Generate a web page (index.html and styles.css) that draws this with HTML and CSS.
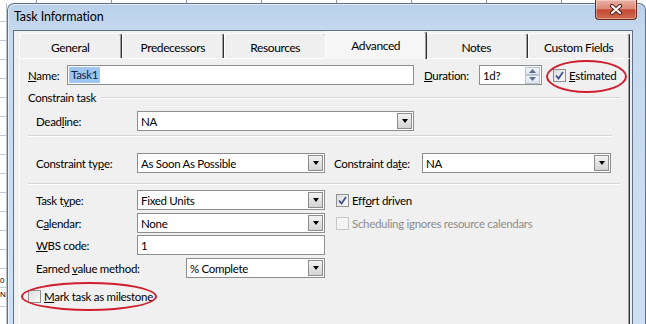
FILE: index.html
```html
<!DOCTYPE html>
<html>
<head>
<meta charset="utf-8">
<title>Task Information</title>
<link rel="stylesheet" href="styles.css">
</head>
<body>
<div class="desk">
  <div class="sheet">
    <div class="cell">0</div>
    <div class="cell">N</div>
  </div>
  <div class="window">
    <div class="titlebar">
      <span class="title">Task Information</span>
      <div class="close">
        <svg width="16" height="11" viewBox="0 0 16 11"><path d="M4 2 L12 9 M12 2 L4 9" stroke="#4b1d17" stroke-width="4.2" stroke-linecap="round"/><path d="M4 2 L12 9 M12 2 L4 9" stroke="#fff" stroke-width="2.2" stroke-linecap="round"/></svg>
      </div>
    </div>
    <div class="client">
      <div class="tabs">
        <div class="tab">General</div>
        <div class="tab">Predecessors</div>
        <div class="tab">Resources</div>
        <div class="tab active">Advanced</div>
        <div class="tab">Notes</div>
        <div class="tab">Custom Fields</div>
      </div>
      <div class="panel">
        <div class="row">
          <span class="lbl lbl-name"><u>N</u>ame:</span>
          <div class="field w-name"><span class="hl">Task1</span></div>
          <span class="lbl lbl-dur"><u>D</u>uration:</span>
          <div class="field w-dur">1d?
            <div class="spin">
              <div class="spin-btn"><svg width="7" height="4" viewBox="0 0 7 4"><path d="M0 4 L3.5 0 L7 4Z" fill="#5b6f8c"/></svg></div>
              <div class="spin-btn"><svg width="7" height="4" viewBox="0 0 7 4"><path d="M0 0 L3.5 4 L7 0Z" fill="#5b6f8c"/></svg></div>
            </div>
          </div>
          <div class="check checked gap-est"><svg width="11" height="11" viewBox="0 0 11 11"><path d="M2 5.5 L4.5 8.5 L9 2" fill="none" stroke="#3a4f94" stroke-width="1.7"/></svg></div>
          <span class="clbl"><u>E</u>stimated</span>
        </div>

        <div class="group">
          <span>Constrain task</span>
          <div class="gline"></div>
        </div>

        <div class="row ind mt-deadline">
          <span class="lbl lbl-main">Dead<u>l</u>ine:</span>
          <div class="field combo w-deadline">NA<span class="dd"><i class="tri"></i></span></div>
        </div>

        <div class="hr hr1"></div>

        <div class="row ind mt-ctype">
          <span class="lbl lbl-main">Constraint ty<u>p</u>e:</span>
          <div class="field combo w-std">As Soon As Possible<span class="dd"><i class="tri"></i></span></div>
          <span class="lbl lbl-cdate">Constraint da<u>t</u>e:</span>
          <div class="field combo w-cdate">NA<span class="dd"><i class="tri"></i></span></div>
        </div>

        <div class="hr hr2"></div>

        <div class="row ind mt-ttype">
          <span class="lbl lbl-main">Task t<u>y</u>pe:</span>
          <div class="field combo w-std">Fixed Units<span class="dd"><i class="tri"></i></span></div>
          <div class="check checked gap-right"><svg width="11" height="11" viewBox="0 0 11 11"><path d="M2 5.5 L4.5 8.5 L9 2" fill="none" stroke="#3a4f94" stroke-width="1.7"/></svg></div>
          <span class="clbl">Eff<u>o</u>rt driven</span>
        </div>

        <div class="row ind mt-cal">
          <span class="lbl lbl-main">C<u>a</u>lendar:</span>
          <div class="field combo w-std">None<span class="dd"><i class="tri"></i></span></div>
          <div class="check disabled gap-right"></div>
          <span class="clbl dis">Scheduling i<u>g</u>nores resource calendars</span>
        </div>

        <div class="row ind mt-wbs">
          <span class="lbl lbl-main"><u>W</u>BS code:</span>
          <div class="field w-std">1</div>
        </div>

        <div class="row ind mt-ev">
          <span class="lbl lbl-ev">Earned <u>v</u>alue method:</span>
          <div class="field combo w-ev">% Complete<span class="dd"><i class="tri"></i></span></div>
        </div>

        <div class="row small mt-ms">
          <div class="check"></div>
          <span class="clbl"><u>M</u>ark task as milestone</span>
        </div>
      </div>
    </div>
  </div>
</div>
<div class="ellipse e1"></div>
<div class="ellipse e2"></div>
</body>
</html>
```

FILE: styles.css
```css
* { box-sizing: border-box; margin: 0; padding: 0; }
html, body { width: 646px; height: 324px; overflow: hidden; }
body {
  position: relative;
  font-family: Lato, "Liberation Sans", sans-serif;
  font-size: 11.5px;
  letter-spacing: -0.3px;
  color: #000;
  background: #fff repeating-linear-gradient(to right, #fff 0 36px, #8d96a1 36px 37px, #fff 37px 75px);
}
u { text-decoration: underline; text-underline-offset: 1px; }

.desk { display: flex; height: 324px; }

.sheet {
  width: 7px;
  flex: none;
  margin-top: 3px;
  overflow: hidden;
  background: repeating-linear-gradient(to bottom, #fff 0 18px, #c3cad4 18px 19px);
  border-right: 1px solid #b9c2cc;
  display: flex;
  flex-direction: column;
  justify-content: flex-end;
  padding-bottom: 22px;
  font-family: "Liberation Sans", sans-serif;
  font-size: 8px;
  letter-spacing: 0;
}
.cell { height: 14px; line-height: 14px; }

.window {
  flex: none;
  width: 639px;
  margin-top: 3px;
  border: 1px solid #5e7189;
  border-bottom: 0;
  border-radius: 7px 7px 0 0;
  background: linear-gradient(to bottom, #b8d0ea 0, #c6daef 28px, #cde0f3 100%);
  box-shadow: inset 1px 1px 0 rgba(255,255,255,0.55);
  padding: 0 12px 0 5px;
  display: flex;
  flex-direction: column;
}

.titlebar { height: 26px; flex: none; display: flex; align-items: flex-start; }
.title { font-size: 12.5px; letter-spacing: -0.1px; line-height: 16px; padding: 5px 0 0 1px; color: #000; }
.close {
  margin-left: auto;
  margin-top: -4px;
  margin-right: -4px;
  width: 42px;
  height: 20px;
  border: 1px solid #6a2c22;
  border-top: 0;
  border-radius: 0 0 4px 4px;
  background: linear-gradient(to bottom, #eab0a2 0%, #dc8b78 45%, #c54a33 52%, #cf6a4f 100%);
  box-shadow: inset 0 0 0 1px rgba(255,255,255,0.35);
  display: flex;
  align-items: center;
  justify-content: center;
}

.client {
  flex: 1;
  background: #f0f0f0;
  border: 1px solid #5f7186;
  border-bottom: 0;
  padding: 2px 1px 0 5px;
  display: flex;
  flex-direction: column;
}

.tabs { display: flex; height: 25px; width: 611px; flex: none; }
.tab {
  flex: 1;
  display: flex;
  align-items: center;
  justify-content: center;
  padding-top: 3px;
  font-size: 12px;
  letter-spacing: -0.4px;
  background: #efefef;
  border-top: 1px solid #fff;
  border-left: 1px solid #fff;
  border-right: 1px solid #303030;
  box-shadow: inset -1px 0 0 #a0a0a0;
  border-radius: 3px 3px 0 0;
}
.tab.active {
  position: relative;
  z-index: 1;
  margin: -2px -2px -1px;
  height: 28px;
  padding-top: 0;
  background: #f6f6f6;
}

.panel {
  flex: 1;
  width: 611px;
  border-top: 1px solid #fff;
  border-left: 1px solid #fff;
  border-right: 1px solid #303030;
  box-shadow: inset -1px 0 0 #a0a0a0;
  padding: 6px 0 0 8px;
  display: flex;
  flex-direction: column;
}

.row { display: flex; align-items: center; height: 20px; flex: none; }
.row.small { height: 13px; }
.row.ind { padding-left: 8px; }

.lbl { flex: none; white-space: nowrap; }
.lbl-name { width: 39px; }
.lbl-dur { width: 55px; margin-left: 10px; }
.lbl-main { width: 101px; }
.lbl-cdate { width: 88px; margin-left: 9px; }
.lbl-ev { width: 150px; }

.field {
  flex: none;
  height: 20px;
  border: 1px solid #8c8e90;
  background: #fff;
  display: flex;
  align-items: center;
  padding-left: 3px;
  white-space: nowrap;
}
.w-name { width: 347px; padding-left: 1px; }
.w-dur { width: 63px; }
.w-deadline { width: 277px; }
.w-std { width: 188px; }
.w-cdate { width: 189px; }
.w-ev { width: 139px; }

.hl { background: #9ec6ee; color: #0c1f4a; padding: 0 2px; line-height: 16px; }

.spin {
  margin-left: auto;
  margin-right: 1px;
  width: 15px;
  height: 17px;
  display: flex;
  flex-direction: column;
}
.spin-btn {
  flex: 1;
  border: 1px solid #b7c3d3;
  background: linear-gradient(to bottom, #f3f6fa, #dde5ef);
  display: flex;
  align-items: center;
  justify-content: center;
}

.combo .dd {
  margin-left: auto;
  margin-right: 1px;
  width: 15px;
  height: 16px;
  border: 1px solid #8d8d8d;
  background: linear-gradient(to bottom, #f3f3f3, #d3d3d3);
  display: flex;
  align-items: center;
  justify-content: center;
}
.tri {
  width: 0;
  height: 0;
  border-left: 3.5px solid transparent;
  border-right: 3.5px solid transparent;
  border-top: 4px solid #000;
}

.check {
  flex: none;
  width: 13px;
  height: 13px;
  border: 1px solid #8f8f8f;
  background: linear-gradient(135deg, #dcdcdc, #fbfbfb);
  display: flex;
  align-items: center;
  justify-content: center;
}
.check.disabled { border-color: #c8c8c8; background: #f4f4f4; }
.gap-est { margin-left: 11px; }
.gap-right { margin-left: 11px; }
.clbl { margin-left: 3px; white-space: nowrap; }
.clbl.dis { color: #8d8d8d; }

.group { display: flex; align-items: center; height: 14px; margin-top: 5px; flex: none; }
.gline { flex: 1; height: 2px; border-top: 1px solid #d5d5d5; border-bottom: 1px solid #fff; margin: 1px 8px 0 6px; }

.hr { height: 2px; border-top: 1px solid #d5d5d5; border-bottom: 1px solid #fff; flex: none; }
.hr1 { width: 584px; margin-top: 4px; }
.hr2 { width: 592px; margin-top: 10px; }

.mt-deadline { margin-top: 7px; }
.mt-ctype { margin-top: 16px; }
.mt-ttype { margin-top: 5px; }
.mt-cal { margin-top: 3px; }
.mt-wbs { margin-top: 2px; }
.mt-ev { margin-top: 3px; }
.mt-ms { margin-top: 12px; }

.ellipse { position: absolute; border: 2px solid #cf1f2f; border-radius: 50%; }
.e1 { left: 546px; top: 60px; width: 81px; height: 33px; }
.e2 { left: 21px; top: 282px; width: 136px; height: 29px; }
```
